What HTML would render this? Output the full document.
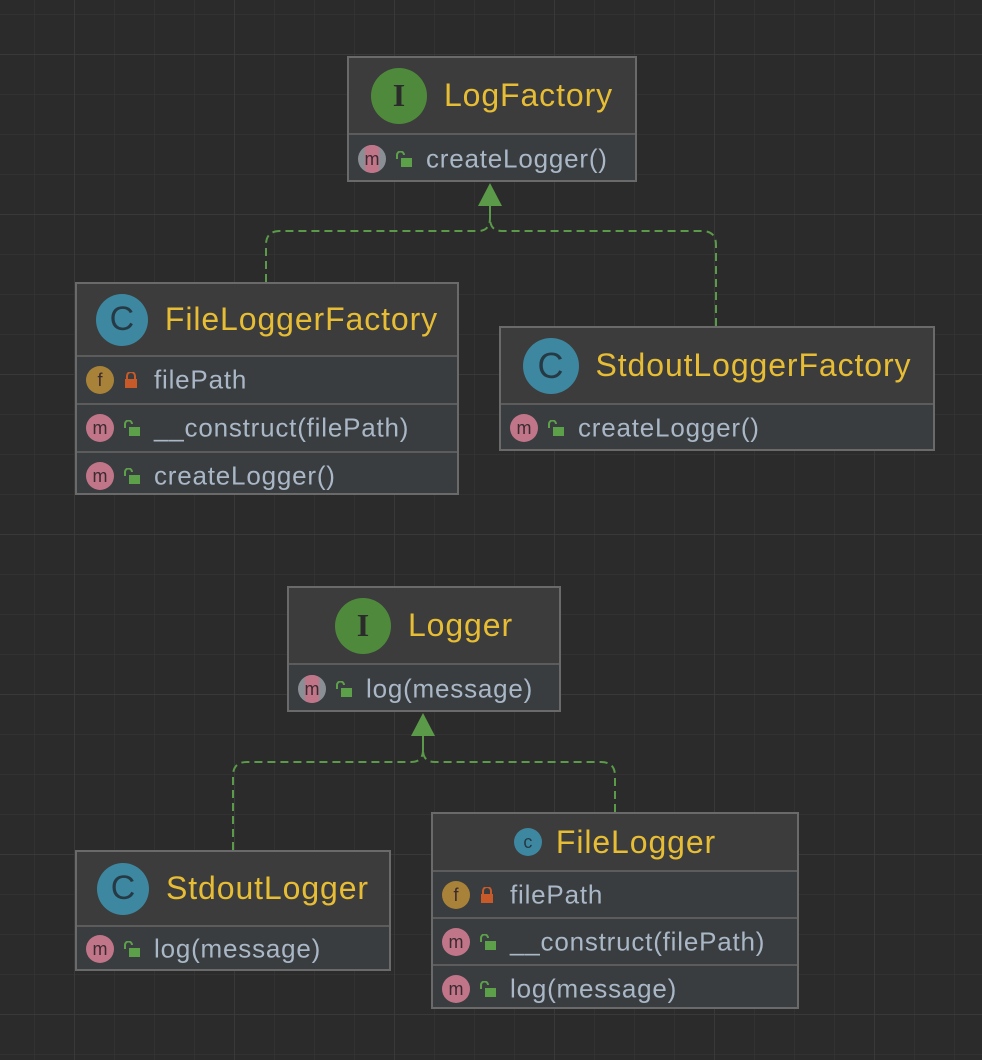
<!DOCTYPE html>
<html><head><meta charset="utf-8"><style>
html,body{margin:0;padding:0;background:#2b2b2b;width:982px;height:1060px;overflow:hidden;font-family:"Liberation Sans","DejaVu Sans",sans-serif}
svg.bg{position:absolute;left:0;top:0}
.box{position:absolute;box-sizing:border-box;border:2px solid #6a6a6a;background:#3a3d40;display:flex;flex-direction:column}
.hd{background:#3c3c3c;display:flex;align-items:center;justify-content:center;gap:17px;flex:none}
.ttl{color:#e6bd34;font-size:32px;letter-spacing:0.9px}
.row{border-top:2px solid #5c5c5c;position:relative;flex:none}
.row .t{position:absolute;left:77px;top:50%;transform:translateY(-50%);color:#a9b7c6;font-size:26px;letter-spacing:.8px;white-space:nowrap}
.big{border-radius:50%;display:flex;align-items:center;justify-content:center;flex:none}
.ic{position:absolute;left:9px;top:50%;margin-top:-14px;width:28px;height:28px;border-radius:50%;display:flex;align-items:center;justify-content:center;font-size:18px;color:#3b2a30;line-height:1;overflow:hidden}
.m{background:#c17589}
.am{background:#8a8f96}
.am::before{content:"";position:absolute;left:7px;top:0;width:14px;height:28px;background:#c17589}
.am span{position:relative}
.f{background:#a78238}
.lk{position:absolute;left:46px;top:50%;margin-top:-8px}
</style></head><body>
<svg class="bg" width="982" height="1060">
<defs>
<pattern id="mn" width="40" height="40" patternUnits="userSpaceOnUse" x="34" y="14">
<path d="M0 0H40M0 0V40" stroke="#323232" stroke-width="2" fill="none"/></pattern>
<pattern id="mj" width="160" height="160" patternUnits="userSpaceOnUse" x="74" y="54">
<path d="M0 0H160M0 0V160" stroke="#393939" stroke-width="2" fill="none"/></pattern>
</defs>
<rect width="982" height="1060" fill="url(#mn)"/>
<rect width="982" height="1060" fill="url(#mj)"/>
<g stroke="#5b9a48" stroke-width="2" fill="none" stroke-dasharray="8,5">
<path d="M266 282V245Q266 231 280 231H478Q490 231 490 218"/>
<path d="M716 326V245Q716 231 702 231H502Q490 231 490 218"/>
<path d="M233 850V776Q233 762 247 762H411Q423 762 423 750"/>
<path d="M615 812V776Q615 762 601 762H435Q423 762 423 750"/>
</g>
<g stroke="#5b9a48" stroke-width="2"><path d="M490 205V218M423 735V750"/></g>
<path d="M490 183L502 206H478Z" fill="#5b9a48"/>
<path d="M423 713L435 736H411Z" fill="#5b9a48"/>
</svg>

<!-- LogFactory -->
<div class="box" style="left:347px;top:56px;width:290px;height:126px">
<div class="hd" style="height:75px"><div class="big" style="width:56px;height:56px;background:#4f8a3c;color:#2b2b2b;font:bold 32px 'Liberation Serif',serif">I</div><span class="ttl">LogFactory</span></div>
<div class="row" style="height:47px"><div class="ic am"><span>m</span></div><svg class="lk" width="18" height="16"><path d="M2 8V4a3.5 3.5 0 0 1 7 0" stroke="#5da04a" stroke-width="2" fill="none"/><rect x="6" y="7" width="11" height="9" fill="#5da04a"/></svg><span class="t">createLogger()</span></div>
</div>

<!-- FileLoggerFactory -->
<div class="box" style="left:75px;top:282px;width:384px;height:213px">
<div class="hd" style="height:71px"><div class="big" style="width:52px;height:52px;background:#3d88a0;color:#253a45;font-size:34px">C</div><span class="ttl">FileLoggerFactory</span></div>
<div class="row" style="height:46px"><div class="ic f">f</div><svg class="lk" width="16" height="16"><path d="M4 7V4a4 4 0 0 1 8 0V7" stroke="#c85a2a" stroke-width="2" fill="none"/><rect x="2" y="7" width="12" height="9" fill="#c85a2a"/></svg><span class="t">filePath</span></div>
<div class="row" style="height:46px"><div class="ic m">m</div><svg class="lk" width="18" height="16"><path d="M2 8V4a3.5 3.5 0 0 1 7 0" stroke="#5da04a" stroke-width="2" fill="none"/><rect x="6" y="7" width="11" height="9" fill="#5da04a"/></svg><span class="t">__construct(filePath)</span></div>
<div class="row" style="height:46px"><div class="ic m">m</div><svg class="lk" width="18" height="16"><path d="M2 8V4a3.5 3.5 0 0 1 7 0" stroke="#5da04a" stroke-width="2" fill="none"/><rect x="6" y="7" width="11" height="9" fill="#5da04a"/></svg><span class="t">createLogger()</span></div>
</div>

<!-- StdoutLoggerFactory -->
<div class="box" style="left:499px;top:326px;width:436px;height:125px">
<div class="hd" style="height:75px"><div class="big" style="width:56px;height:56px;background:#3d88a0;color:#253a45;font-size:36px">C</div><span class="ttl">StdoutLoggerFactory</span></div>
<div class="row" style="height:46px"><div class="ic m">m</div><svg class="lk" width="18" height="16"><path d="M2 8V4a3.5 3.5 0 0 1 7 0" stroke="#5da04a" stroke-width="2" fill="none"/><rect x="6" y="7" width="11" height="9" fill="#5da04a"/></svg><span class="t">createLogger()</span></div>
</div>

<!-- Logger -->
<div class="box" style="left:287px;top:586px;width:274px;height:126px">
<div class="hd" style="height:75px"><div class="big" style="width:56px;height:56px;background:#4f8a3c;color:#2b2b2b;font:bold 32px 'Liberation Serif',serif">I</div><span class="ttl">Logger</span></div>
<div class="row" style="height:47px"><div class="ic am"><span>m</span></div><svg class="lk" width="18" height="16"><path d="M2 8V4a3.5 3.5 0 0 1 7 0" stroke="#5da04a" stroke-width="2" fill="none"/><rect x="6" y="7" width="11" height="9" fill="#5da04a"/></svg><span class="t">log(message)</span></div>
</div>

<!-- StdoutLogger -->
<div class="box" style="left:75px;top:850px;width:316px;height:121px">
<div class="hd" style="height:73px"><div class="big" style="width:52px;height:52px;background:#3d88a0;color:#253a45;font-size:34px">C</div><span class="ttl">StdoutLogger</span></div>
<div class="row" style="height:44px"><div class="ic m">m</div><svg class="lk" width="18" height="16"><path d="M2 8V4a3.5 3.5 0 0 1 7 0" stroke="#5da04a" stroke-width="2" fill="none"/><rect x="6" y="7" width="11" height="9" fill="#5da04a"/></svg><span class="t">log(message)</span></div>
</div>

<!-- FileLogger -->
<div class="box" style="left:431px;top:812px;width:368px;height:197px">
<div class="hd" style="height:56px;gap:14px"><div class="big" style="width:28px;height:28px;background:#3d88a0;color:#253a45;font-size:18px">c</div><span class="ttl">FileLogger</span></div>
<div class="row" style="height:45px"><div class="ic f">f</div><svg class="lk" width="16" height="16"><path d="M4 7V4a4 4 0 0 1 8 0V7" stroke="#c85a2a" stroke-width="2" fill="none"/><rect x="2" y="7" width="12" height="9" fill="#c85a2a"/></svg><span class="t">filePath</span></div>
<div class="row" style="height:45px"><div class="ic m">m</div><svg class="lk" width="18" height="16"><path d="M2 8V4a3.5 3.5 0 0 1 7 0" stroke="#5da04a" stroke-width="2" fill="none"/><rect x="6" y="7" width="11" height="9" fill="#5da04a"/></svg><span class="t">__construct(filePath)</span></div>
<div class="row" style="height:45px"><div class="ic m">m</div><svg class="lk" width="18" height="16"><path d="M2 8V4a3.5 3.5 0 0 1 7 0" stroke="#5da04a" stroke-width="2" fill="none"/><rect x="6" y="7" width="11" height="9" fill="#5da04a"/></svg><span class="t">log(message)</span></div>
</div>
</body></html>
